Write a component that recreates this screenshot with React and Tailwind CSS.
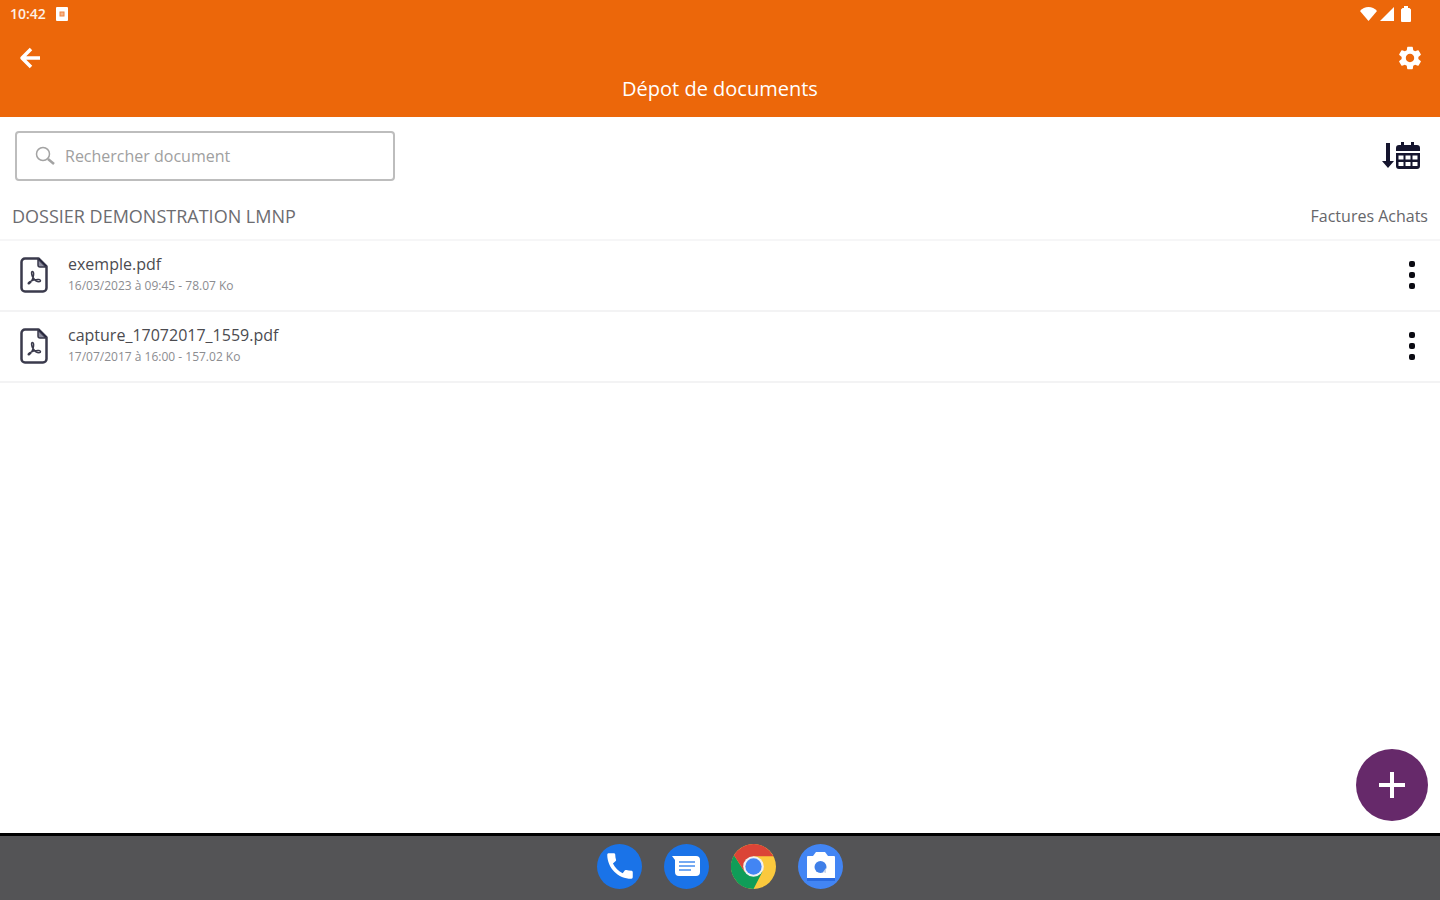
import React, { useState } from 'react'
import { MdSettings, MdCall } from 'react-icons/md'

const DOCUMENTS = [
  { id: 1, name: 'exemple.pdf', info: '16/03/2023 à 09:45 - 78.07 Ko' },
  { id: 2, name: 'capture_17072017_1559.pdf', info: '17/07/2017 à 16:00 - 157.02 Ko' },
]

function StatusBar() {
  return (
    <div className="flex h-7 items-center justify-between pl-[10px] pr-[29px]">
      <div className="flex items-center gap-[10px]">
        <span className="text-[14px] leading-5 font-semibold text-white/90">10:42</span>
        <svg width="12" height="14" viewBox="0 0 12 14" fill="none">
          <rect width="12" height="14" rx="1" fill="#fff" />
          <rect x="4" y="5" width="4" height="4" fill="#f6b58a" stroke="#ef8440" />
        </svg>
      </div>
      <div className="flex items-center gap-[3px]">
        <svg width="17" height="14" viewBox="0 0 17 14" fill="#fff">
          <path d="M8.500 14 0 4C2.300 1.200 5.200 0 8.500 0s6.200 1.200 8.500 4z" />
        </svg>
        <svg width="14" height="14" viewBox="0 0 14 14" fill="#fff">
          <path d="M14 0v14H0z" />
        </svg>
        <svg className="ml-1" width="10" height="16" viewBox="0 0 10 16" fill="#fff">
          <path d="M3 0h4v2h1.500L10 3.500V15a1 1 0 0 1-1 1H1a1 1 0 0 1-1-1V3.500L1.500 2H3z" />
        </svg>
      </div>
    </div>
  )
}

function Header() {
  return (
    <header className="h-[117px] shrink-0 bg-[#ec670a] text-white">
      <StatusBar />
      <div className="flex items-center justify-between px-4 pt-4">
        <button type="button" aria-label="Retour">
          <svg width="28" height="28" viewBox="0 0 28 28" fill="none" stroke="currentColor" strokeWidth="3.500" strokeLinejoin="round">
            <path d="M24 14H6M15 5l-9 9 9 9" />
          </svg>
        </button>
        <button type="button" aria-label="Paramètres">
          <MdSettings size={28} />
        </button>
      </div>
      <h1 className="pt-px text-center text-[20px] leading-8">Dépot de documents</h1>
    </header>
  )
}

function PdfIcon() {
  return (
    <svg className="shrink-0" width="28" height="36" viewBox="0 0 28 36" fill="none" stroke="#3a3a4c" strokeLinejoin="round" strokeLinecap="round">
      <path d="M5 1.500h13.500l8 8V31a3.500 3.500 0 0 1-3.500 3.500H5A3.500 3.500 0 0 1 1.500 31V5A3.500 3.500 0 0 1 5 1.500z" strokeWidth="2.500" />
      <path d="M18 2v6a2 2 0 0 0 2 2h6z" fill="#8e8ea0" strokeWidth="1.500" />
      <path d="M18 1.500h1.500l7 7V10z" fill="#1b1b38" strokeWidth="1" />
      <path d="M12.500 14.500c-1.500 0-1 3.500.5 6 1.500 2.400 4 4.300 6 4.300s2-2 0-2.300c-3-.4-7 .8-9.500 2.300-2 1.200-1.500 2.700 0 1.500 1.800-1.500 3.500-5 4-8 .3-2.200 0-3.800-1-3.800z" strokeWidth="1.500" />
    </svg>
  )
}

function SortDateIcon() {
  return (
    <svg width="38" height="28" viewBox="0 0 38 28" fill="#15152e">
      <path d="M4 1h4v18h4l-6 7-6-7h4z" />
      <path d="M19 0h3v3h7V0h3v3h3a3 3 0 0 1 3 3v3H14V6a3 3 0 0 1 3-3h2z" />
      <path
        fillRule="evenodd"
        d="M14 11h24v13a3 3 0 0 1-3 3H17a3 3 0 0 1-3-3zM16.500 13.500v4h5v-4zM23.500 13.500v4h5v-4zM30.500 13.500v4h5v-4zM16.500 20v4h5v-4zM23.500 20v4h5v-4zM30.500 20v4h5v-4z"
      />
    </svg>
  )
}

function DocumentRow({ name, info }) {
  return (
    <li className="flex h-[71px] items-center border-b-2 border-[#f3f3f4] pb-px pl-5 pr-4">
      <PdfIcon />
      <div className="ml-5 flex-1 pb-[3px]">
        <div className="text-[16px] leading-6 text-[#4b4b50]">{name}</div>
        <div className="text-[12px] leading-5 text-[#8c8c90]">{info}</div>
      </div>
      <button type="button" aria-label={`Options de ${name}`} className="flex w-6 flex-col items-center gap-[5px] py-2">
        <span className="size-[6px] rounded-[2px] bg-[#0b0b12]" />
        <span className="size-[6px] rounded-[2px] bg-[#0b0b12]" />
        <span className="size-[6px] rounded-[2px] bg-[#0b0b12]" />
      </button>
    </li>
  )
}

function PhoneIcon() {
  return (
    <span className="flex size-[45px] items-center justify-center rounded-full bg-[#1a73e8] text-white">
      <MdCall size={34} />
    </span>
  )
}

function MessagesIcon() {
  return (
    <svg width="45" height="45" viewBox="0 0 45 45">
      <circle cx="22.500" cy="22.500" r="22.500" fill="#1a73e8" />
      <path d="M8 12h24a4 4 0 0 1 4 4v12a4 4 0 0 1-4 4H15a4 4 0 0 1-4-4V16z" fill="#fff" />
      <path d="M15 18h16M15 22h16M15 26h12" stroke="#74a9f2" strokeWidth="2" />
    </svg>
  )
}

function ChromeIcon() {
  return (
    <svg width="45" height="45" viewBox="0 0 48 48">
      <circle cx="24" cy="24" r="24" fill="#fbc93d" />
      <path d="M3.200 12A24 24 0 0 0 24 48l9.500-18.500H14.500z" fill="#109d58" />
      <path d="M3.200 12A24 24 0 0 1 45.300 13H24l-9.500 16.500z" fill="#db4437" />
      <circle cx="24" cy="24" r="11" fill="#f1f1f1" />
      <circle cx="24" cy="24" r="8.700" fill="#4285f4" />
    </svg>
  )
}

function CameraIcon() {
  return (
    <svg width="45" height="45" viewBox="0 0 45 45">
      <circle cx="22.500" cy="22.500" r="22.500" fill="#4285f4" />
      <path d="M9 34h28v3H9z" fill="#2a6adf" />
      <path d="M10 12h5l3-4h9l3 4h6a1 1 0 0 1 1 1v21H9V13a1 1 0 0 1 1-1z" fill="#fff" />
      <circle cx="22.500" cy="23" r="6" fill="#3f7fe8" />
      <path d="m25 28 3-4v5z" fill="#c9d6ea" />
    </svg>
  )
}

const APPS = [
  { id: 'phone', label: 'Téléphone', Icon: PhoneIcon },
  { id: 'messages', label: 'Messages', Icon: MessagesIcon },
  { id: 'chrome', label: 'Chrome', Icon: ChromeIcon },
  { id: 'camera', label: 'Appareil photo', Icon: CameraIcon },
]

function Taskbar() {
  return (
    <nav className="flex h-[67px] shrink-0 items-center justify-center gap-[22px] border-t-[3px] border-black bg-[#545456] pb-1">
      {APPS.map(({ id, label, Icon }) => (
        <button key={id} type="button" aria-label={label}>
          <Icon />
        </button>
      ))}
    </nav>
  )
}

export default function App() {
  const [query, setQuery] = useState('')
  const docs = DOCUMENTS.filter((d) => d.name.includes(query.toLowerCase()))

  return (
    <div className="flex min-h-screen flex-col bg-white font-['Open_Sans',sans-serif]">
      <Header />

      <main className="relative flex-1">
        {/* Search + sort */}
        <div className="flex items-center justify-between pt-[14px] pl-[15px] pr-5">
          <label className="flex h-[50px] w-[380px] items-center gap-[10px] rounded-[4px] border-2 border-[#bdbdbd] px-[18px]">
            <svg width="20" height="20" viewBox="0 0 20 20" fill="none" stroke="#a3a3a3">
              <circle cx="8" cy="8" r="6.500" strokeWidth="1.500" />
              <path d="m13 13 6 5" strokeWidth="2.500" />
            </svg>
            <input
              type="text"
              aria-label="Rechercher document"
              placeholder="Rechercher document"
              value={query}
              onChange={(e) => setQuery(e.target.value)}
              className="min-w-0 flex-1 text-[16px] text-[#4b4b50] outline-none placeholder:text-[#a0a0a0]"
            />
          </label>
          <button type="button" aria-label="Trier par date">
            <SortDateIcon />
          </button>
        </div>

        {/* Folder */}
        <div className="flex h-[60px] items-center justify-between border-b-2 border-[#f6f6f7] px-3 pt-3">
          <h2 className="text-[18px] text-[#6c6c70]">DOSSIER DEMONSTRATION LMNP</h2>
          <span className="text-[16px] text-[#66666a]">Factures Achats</span>
        </div>

        <ul>
          {docs.map((d) => (
            <DocumentRow key={d.id} name={d.name} info={d.info} />
          ))}
        </ul>

        <button
          type="button"
          aria-label="Ajouter un document"
          className="absolute right-3 bottom-3 flex size-[72px] items-center justify-center rounded-full bg-[#66296a] text-white"
        >
          <svg width="26" height="26" viewBox="0 0 26 26" stroke="currentColor" strokeWidth="4">
            <path d="M13 0v26M0 13h26" />
          </svg>
        </button>
      </main>

      <Taskbar />
    </div>
  )
}
